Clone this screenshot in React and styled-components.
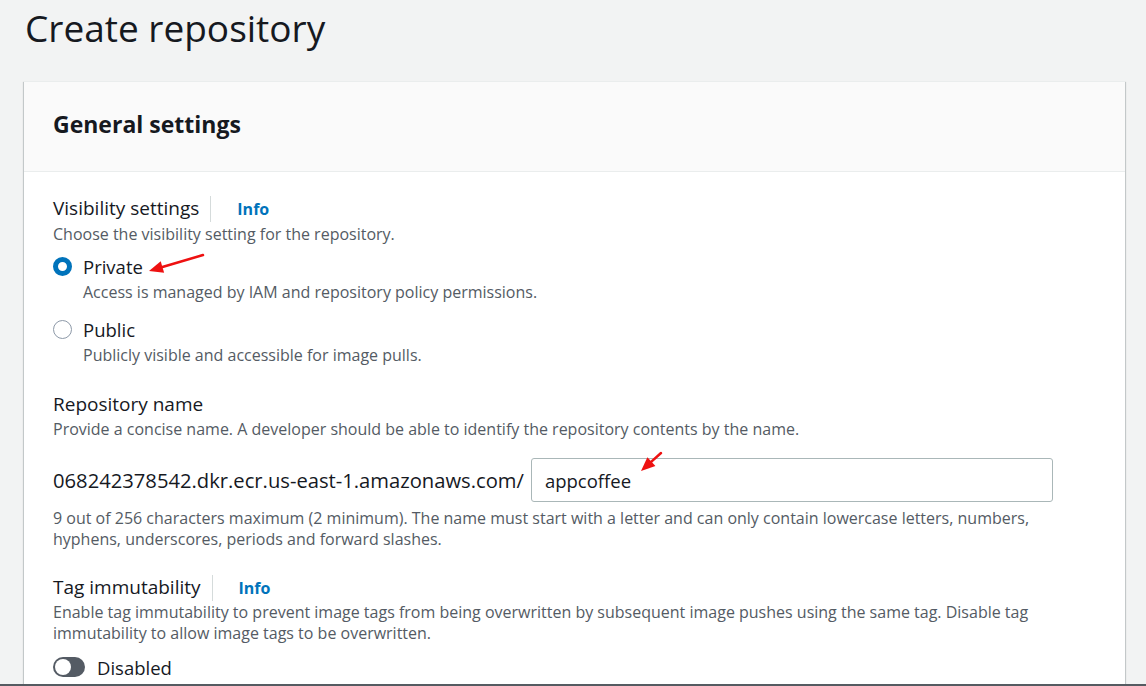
import React from 'react';
import styled, { createGlobalStyle } from 'styled-components';

const GlobalStyle = createGlobalStyle`
  html, body {
    margin: 0;
    padding: 0;
    background: #f2f3f3;
    font-family: 'Open Sans', 'Noto Sans', sans-serif;
    color: #16191f;
  }
  * { box-sizing: border-box; }
`;

const Page = styled.div`
  position: relative;
  width: 1146px;
  height: 686px;
  display: flex;
  flex-direction: column;
  overflow: hidden;
  background: #f2f3f3;
`;

const Content = styled.div`
  flex: 1;
  overflow: hidden;
  padding: 0 21px 0 24px;
`;

const PageTitle = styled.h1`
  margin: 4px 0 0 1px;
  font-size: 37px;
  line-height: 48px;
  font-weight: 400;
  color: #16191f;
`;

const Card = styled.section`
  margin-top: 29px;
  background: #fff;
  border-top: 1px solid #eaeded;
  box-shadow: 0 1px 1px 0 rgba(0, 28, 36, 0.3), 1px 1px 1px 0 rgba(0, 28, 36, 0.15),
    -1px 1px 1px 0 rgba(0, 28, 36, 0.15);
`;

const CardHeader = styled.div`
  height: 90px;
  background: #fafafa;
  border-bottom: 1px solid #eaeded;
  display: flex;
  align-items: center;
  padding: 0 29px 5px 29px;
`;

const CardTitle = styled.h2`
  margin: 0;
  font-size: 23px;
  font-weight: 700;
  color: #16191f;
`;

const CardBody = styled.div`
  padding: 25px 29px 40px 29px;
`;

const Field = styled.div`
  margin-top: ${({ $gap }) => $gap || 0}px;
`;

const LabelRow = styled.div`
  display: flex;
  align-items: center;
  height: 24px;
`;

const Label = styled.span`
  font-size: 19px;
  line-height: 24px;
  color: #16191f;
  ${({ $withInfo }) => $withInfo && `
    padding-right: 11px;
    border-right: 1px solid #d5dbdb;
    height: 26px;
  `}
`;

const InfoLink = styled.a`
  padding-left: 26px;
  font-size: 16px;
  font-weight: 700;
  color: #0073bb;
  text-decoration: none;
`;

const Description = styled.div`
  margin-top: ${({ $gap }) => ($gap === undefined ? 1 : $gap)}px;
  font-size: 16px;
  line-height: ${({ $lh }) => $lh || 24}px;
  color: #545b64;
`;

const RadioOption = styled.label`
  display: grid;
  grid-template-columns: 30px 1fr;
  margin-top: ${({ $gap }) => $gap}px;
`;

const RadioCircle = styled.span`
  width: 19px;
  height: 19px;
  margin-top: 2px;
  border-radius: 50%;
  border: ${({ $checked }) => ($checked ? '5px solid #0073bb' : '1.5px solid #8d99a8')};
  background: #fff;
`;

const RadioText = styled.span`
  font-size: 18.5px;
  line-height: 24px;
  color: #16191f;
`;

const RadioDesc = styled.span`
  grid-column: 2;
  margin-top: 1px;
  font-size: 16px;
  line-height: 24px;
  color: #545b64;
`;

const NameRow = styled.div`
  display: flex;
  align-items: center;
  margin-top: 17px;
`;

const Prefix = styled.span`
  font-size: 20.2px;
  color: #16191f;
  margin-right: 7px;
`;

const NameInput = styled.input`
  width: 522px;
  height: 44px;
  padding: 0 13px;
  font-family: inherit;
  font-size: 18.5px;
  color: #16191f;
  border: 1px solid #aab7b8;
  border-radius: 3px;
  background: #fff;
  outline: none;
`;

const ToggleRow = styled.div`
  display: flex;
  align-items: center;
  gap: 12px;
  margin-top: 11px;
  height: 24px;
`;

const Track = styled.span`
  position: relative;
  width: 32px;
  height: 20px;
  border-radius: 10px;
  background: ${({ $on }) => ($on ? '#0073bb' : '#545b64')};
`;

const Knob = styled.span`
  position: absolute;
  top: 2px;
  left: ${({ $on }) => ($on ? 14 : 2)}px;
  width: 16px;
  height: 16px;
  border-radius: 50%;
  background: #fff;
`;

const ToggleText = styled.span`
  font-size: 18.5px;
  color: #16191f;
`;

const BottomBar = styled.div`
  height: 2px;
  background: #555b61;
`;

const Annotations = styled.svg`
  position: absolute;
  top: 0;
  left: 0;
  pointer-events: none;
`;

const Arrow = ({ x1, y1, x2, y2 }) => {
  const ang = Math.atan2(y2 - y1, x2 - x1);
  const len = 14;
  const w = 6;
  const bx = x2 - Math.cos(ang) * len;
  const by = y2 - Math.sin(ang) * len;
  const px = -Math.sin(ang) * w;
  const py = Math.cos(ang) * w;
  return (
    <g>
      <line x1={x1} y1={y1} x2={bx} y2={by} stroke="#ee1111" strokeWidth="2.5" strokeLinecap="round" />
      <polygon points={`${x2},${y2} ${bx + px},${by + py} ${bx - px},${by - py}`} fill="#ee1111" />
    </g>
  );
};

export default function App() {
  return (
    <Page>
      <GlobalStyle />
      <Content>
        <PageTitle>Create repository</PageTitle>
        <Card>
          <CardHeader>
            <CardTitle>General settings</CardTitle>
          </CardHeader>
          <CardBody>
            <Field>
              <LabelRow>
                <Label $withInfo>Visibility settings</Label>
                <InfoLink>Info</InfoLink>
              </LabelRow>
              <Description>Choose the visibility setting for the repository.</Description>
              <RadioOption $gap={9}>
                <RadioCircle $checked />
                <RadioText>Private</RadioText>
                <RadioDesc>Access is managed by IAM and repository policy permissions.</RadioDesc>
              </RadioOption>
              <RadioOption $gap={14}>
                <RadioCircle />
                <RadioText>Public</RadioText>
                <RadioDesc>Publicly visible and accessible for image pulls.</RadioDesc>
              </RadioOption>
            </Field>

            <Field $gap={25}>
              <LabelRow>
                <Label>Repository name</Label>
              </LabelRow>
              <Description>
                Provide a concise name. A developer should be able to identify the repository contents by the name.
              </Description>
              <NameRow>
                <Prefix>068242378542.dkr.ecr.us-east-1.amazonaws.com/</Prefix>
                <NameInput defaultValue="appcoffee" />
              </NameRow>
              <Description $gap={6} $lh={21}>
                9 out of 256 characters maximum (2 minimum). The name must start with a letter and can only contain
                lowercase letters, numbers, hyphens, underscores, periods and forward slashes.
              </Description>
            </Field>

            <Field $gap={26}>
              <LabelRow>
                <Label $withInfo>Tag immutability</Label>
                <InfoLink>Info</InfoLink>
              </LabelRow>
              <Description $gap={2} $lh={21}>
                Enable tag immutability to prevent image tags from being overwritten by subsequent image pushes using
                the same tag. Disable tag immutability to allow image tags to be overwritten.
              </Description>
              <ToggleRow>
                <Track>
                  <Knob />
                </Track>
                <ToggleText>Disabled</ToggleText>
              </ToggleRow>
            </Field>
          </CardBody>
        </Card>
      </Content>
      <BottomBar />
      <Annotations width="1146" height="686">
        <Arrow x1={203} y1={255} x2={149} y2={271} />
        <Arrow x1={661} y1={453} x2={641} y2={471} />
      </Annotations>
    </Page>
  );
}
